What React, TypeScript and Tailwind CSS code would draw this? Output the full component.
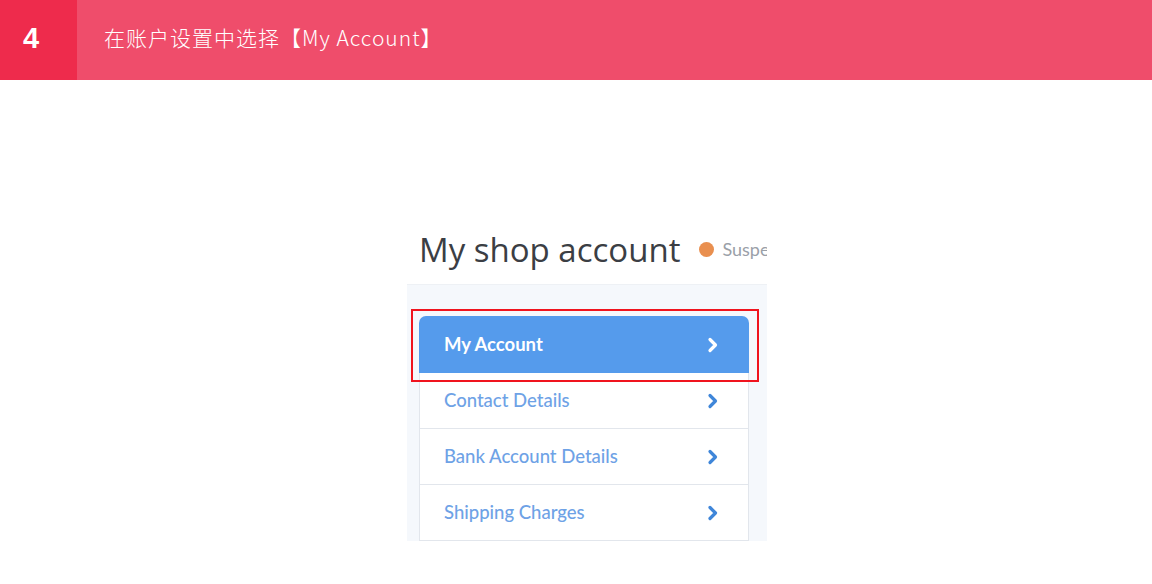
const items = ['Contact Details', 'Bank Account Details', 'Shipping Charges'];

const Chevron = ({ className }: { className?: string }) => (
  <svg width="12" height="16" viewBox="0 0 12 16" className={className}>
    <path d="M3 2.5 L8.5 8 L3 13.5" fill="none" stroke="currentColor" strokeWidth="3.2" strokeLinecap="round" strokeLinejoin="round" />
  </svg>
);

export default function App() {
  return (
    <div className="h-[584px] w-[1152px] bg-white" style={{ fontFamily: '"Noto Sans CJK SC", sans-serif' }}>
      <div className="flex h-[80px]">
        <div className="flex w-[77px] items-center pb-[3px] pl-[23px] text-[29px] font-bold text-white bg-[#ee2b4c]" style={{ fontFamily: '"Liberation Sans", sans-serif' }}>
          4
        </div>
        <div className="flex flex-1 items-center bg-[#ef4d6b] pb-[4px] pl-[27px] text-[21px] font-light tracking-[1px] text-white">
          在账户设置中选择【My Account】
        </div>
      </div>

      <div className="ml-[407px] mt-[145px] w-[360px]" style={{ fontFamily: 'Lato, "Open Sans", sans-serif' }}>
        <div className="flex h-[59px] items-center overflow-hidden whitespace-nowrap pb-[10px] pl-[12px]">
          <span className="text-[33px] text-[#3b3e44]" style={{ fontFamily: '"Open Sans", sans-serif' }}>My shop account</span>
          <span className="ml-[19px] h-[15px] w-[15px] shrink-0 rounded-full bg-[#e98f4f]" />
          <span className="ml-[8px] text-[18px] text-[#9aa0a8]">Suspe</span>
        </div>
        <div className="relative h-[257px] border-t border-[#eef1f5] bg-[#f5f8fc] pt-[31px] pl-[12px]">
          <div className="w-[330px]">
            <div className="flex h-[57px] items-center justify-between rounded-t-[7px] bg-[#559bec] pl-[25px] pr-[30px] text-[18.5px] font-bold text-white">
              <span>My Account</span>
              <Chevron className="text-white" />
            </div>
            {items.map((item) => (
              <div key={item} className="flex h-[56px] items-center justify-between border-x border-b border-[#e2e6ec] bg-white pl-[24px] pr-[29px] text-[18.5px] font-medium text-[#6ea2e6]">
                <span>{item}</span>
                <Chevron className="text-[#3f86d9]" />
              </div>
            ))}
          </div>
          <div className="absolute left-[4px] top-[24px] h-[73px] w-[348px] border-2 border-[#f0141e]" />
        </div>
      </div>
    </div>
  );
}
